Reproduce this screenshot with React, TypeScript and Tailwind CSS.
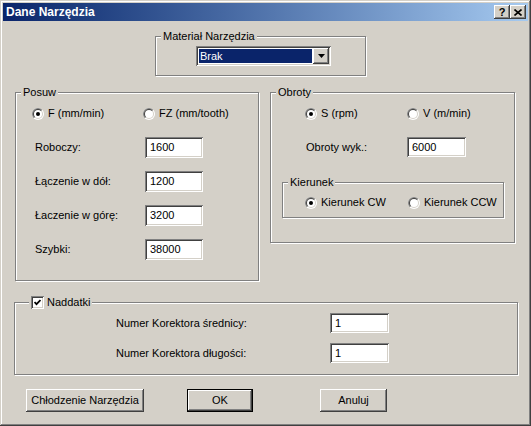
import React from "react";

const raised =
  "shadow-[inset_-1px_-1px_#404040,inset_1px_1px_#ffffff,inset_-2px_-2px_#808080,inset_2px_2px_#d4d0c8]";
const sunken =
  "shadow-[inset_1px_1px_#808080,inset_-1px_-1px_#ffffff,inset_2px_2px_#404040,inset_-2px_-2px_#d4d0c8]";
const etched = "border border-[#808080] shadow-[inset_1px_1px_#ffffff,1px_1px_#ffffff]";

function half(r: number) {
  const d = r / Math.SQRT2;
  return `M${6 - d} ${6 + d} A${r} ${r} 0 0 1 ${6 + d} ${6 - d} Z`;
}

function Radio({ checked }: { checked?: boolean }) {
  return (
    <svg width="12" height="12" viewBox="0 0 12 12" className="shrink-0">
      <circle cx="6" cy="6" r="6" fill="#ffffff" />
      <path d={half(6)} fill="#808080" />
      <circle cx="6" cy="6" r="5" fill="#d4d0c8" />
      <path d={half(5)} fill="#404040" />
      <circle cx="6" cy="6" r="4" fill="#ffffff" />
      {checked && <circle cx="6" cy="6" r="2" fill="#000000" />}
    </svg>
  );
}

function RadioItem({ label, checked, w }: { label: string; checked?: boolean; w?: string }) {
  return (
    <div className={`flex items-center gap-[4px] h-[13px] ${w ?? ""}`}>
      <Radio checked={checked} />
      <span>{label}</span>
    </div>
  );
}

function Field({ value, w = "w-[58px]", h = "h-[21px]" }: { value: string; w?: string; h?: string }) {
  return (
    <div className={`${w} ${h} bg-white ${sunken} flex items-center pl-[5px]`}>{value}</div>
  );
}

function Group({
  label,
  className,
  labelPos = "left-[5px]",
  children,
}: {
  label: React.ReactNode;
  className: string;
  labelPos?: string;
  children: React.ReactNode;
}) {
  return (
    <div className={`relative ${etched} ${className}`}>
      <div className={`absolute ${labelPos} top-[-7px] px-[2px] bg-[#d4d0c8] leading-[13px] flex items-center`}>
        {label}
      </div>
      {children}
    </div>
  );
}

function Button({ label, w, def }: { label: string; w: string; def?: boolean }) {
  return (
    <div className={`${w} h-[23px] ${def ? "border border-black" : ""}`}>
      <div className={`w-full h-full ${raised} flex items-center justify-center`}>{label}</div>
    </div>
  );
}

export default function App() {
  return (
    <div className="w-[531px] h-[426px] bg-[#d4d0c8] p-[3px] flex flex-col text-[11px] text-black font-['Liberation_Sans',Arial,sans-serif] shadow-[inset_-1px_-1px_#404040,inset_1px_1px_#d4d0c8,inset_-2px_-2px_#808080,inset_2px_2px_#ffffff]">
      {/* title bar */}
      <div className="h-[18px] flex items-center pl-[3px] pr-[2px] bg-gradient-to-r from-[#0a246a] to-[#a6caf0]">
        <span className="text-white font-bold text-[12px] flex-1">Dane Narzędzia</span>
        <div className={`w-[16px] h-[14px] bg-[#d4d0c8] ${raised} flex items-center justify-center font-bold text-[11px] leading-none`}>
          ?
        </div>
        <div className={`w-[16px] h-[14px] bg-[#d4d0c8] ${raised} flex items-center justify-center`}>
          <svg width="8" height="7" viewBox="0 0 8 7">
            <path d="M0.5 0.5 L7.5 6.5 M7.5 0.5 L0.5 6.5" stroke="#000" strokeWidth="1.6" />
          </svg>
        </div>
      </div>

      {/* body */}
      <div className="flex flex-col">
        <Group label="Materiał Narzędzia" className="ml-[152px] mt-[15px] w-[211px] h-[40px]">
          <div className="pl-[40px] pt-[9px]">
            <div className={`w-[135px] h-[20px] bg-white ${sunken} flex items-center p-[2px]`}>
              <div className="flex-1 h-full p-[1px]">
                <div className="h-full bg-[#0a246a] text-white flex items-center pl-[1px]">Brak</div>
              </div>
              <div className={`w-[16px] h-full bg-[#d4d0c8] ${raised} flex items-center justify-center`}>
                <svg width="7" height="4" viewBox="0 0 7 4">
                  <path d="M0 0 H7 L3.5 4 Z" fill="#000" />
                </svg>
              </div>
            </div>
          </div>
        </Group>

        <div className="flex items-start mt-[16px]">
          <Group label="Posuw" className="ml-[12px] w-[244px] h-[189px]">
            <div className="pt-[14px] pl-[16px] flex">
              <RadioItem label="F (mm/min)" checked w="w-[111px]" />
              <RadioItem label="FZ (mm/tooth)" />
            </div>
            <div className="mt-[17px] pl-[19px] flex flex-col gap-[13px]">
              {[
                ["Roboczy:", "1600"],
                ["Łączenie w dół:", "1200"],
                ["Łaczenie w górę:", "3200"],
                ["Szybki:", "38000"],
              ].map(([l, v]) => (
                <div key={l} className="flex items-center">
                  <span className="w-[110px]">{l}</span>
                  <Field value={v} />
                </div>
              ))}
            </div>
          </Group>

          <Group label="Obroty" className="ml-[11px] w-[245px] h-[151px]">
            <div className="pt-[14px] pl-[34px] flex">
              <RadioItem label="S (rpm)" checked w="w-[102px]" />
              <RadioItem label="V (m/min)" />
            </div>
            <div className="mt-[17px] pl-[35px] flex items-center">
              <span className="w-[101px]">Obroty wyk.:</span>
              <Field value="6000" w="w-[59px]" h="h-[20px]" />
            </div>
            <Group label="Kierunek" className="ml-[11px] mt-[25px] w-[222px] h-[36px]">
              <div className="pt-[13px] pl-[22px] flex">
                <RadioItem label="Kierunek CW" checked w="w-[103px]" />
                <RadioItem label="Kierunek CCW" />
              </div>
            </Group>
          </Group>
        </div>

        <Group
          labelPos="left-[14px]"
          label={
            <>
              <div className={`w-[13px] h-[13px] bg-white ${sunken} flex items-center justify-center`}>
                <svg width="7" height="7" viewBox="0 0 7 7">
                  <path d="M0.5 3 L2.5 5.2 L6.5 1" stroke="#000" strokeWidth="1.8" fill="none" />
                </svg>
              </div>
              <span className="ml-[3px]">Naddatki</span>
            </>
          }
          className="ml-[11px] mt-[21px] w-[504px] h-[73px]"
        >
          <div className="pt-[10px] pl-[101px] flex flex-col gap-[10px]">
            <div className="flex items-center">
              <span className="w-[214px]">Numer Korektora średnicy:</span>
              <Field value="1" w="w-[59px]" h="h-[20px]" />
            </div>
            <div className="flex items-center">
              <span className="w-[214px]">Numer Korektora długości:</span>
              <Field value="1" w="w-[59px]" h="h-[20px]" />
            </div>
          </div>
        </Group>

        <div className="flex mt-[14px] pl-[23px]">
          <Button label="Chłodzenie Narzędzia" w="w-[118px]" />
          <Button label="OK" w="w-[66px] ml-[43px]" def />
          <Button label="Anuluj" w="w-[67px] ml-[67px]" />
        </div>
      </div>
    </div>
  );
}
